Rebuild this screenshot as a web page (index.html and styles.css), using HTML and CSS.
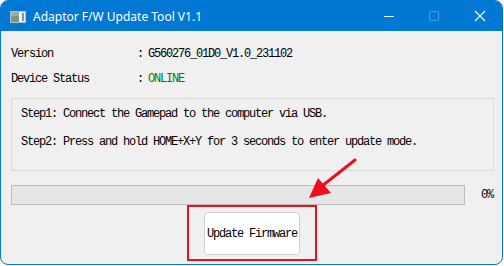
FILE: index.html
```html
<!DOCTYPE html>
<html>
<head>
<meta charset="utf-8">
<link rel="stylesheet" href="styles.css">
</head>
<body>
<div class="window">
  <div class="titlebar">
    <svg class="app-icon" width="16" height="12" viewBox="0 0 16 12">
      <rect x="0.5" y="0.5" width="15" height="11" fill="#e9ecef" stroke="#b9c0c4"/>
      <rect x="1" y="1" width="8" height="10" fill="#6f9a86"/>
      <rect x="1" y="1" width="8" height="4" fill="#8fb3a3"/>
      <rect x="9" y="1" width="2" height="10" fill="#f7f7f7"/>
      <rect x="12" y="2" width="2" height="8" fill="#8a9499"/>
    </svg>
    <span class="title">Adaptor F/W Update Tool V1.1</span>
    <div class="controls">
      <svg class="ctl" width="46" height="30" viewBox="0 0 46 30"><line x1="20" y1="15.5" x2="30" y2="15.5" stroke="#fff" stroke-width="1"/></svg>
      <svg class="ctl" width="46" height="30" viewBox="0 0 46 30"><rect x="19.5" y="10.5" width="9" height="9" rx="1" fill="none" stroke="#4c9de0" stroke-width="1"/></svg>
      <svg class="ctl" width="46" height="30" viewBox="0 0 46 30"><path d="M19 10 L29 20 M29 10 L19 20" stroke="#fff" stroke-width="1.1"/></svg>
    </div>
  </div>
  <div class="content">
    <div class="info-row"><span class="label">Version</span><span class="sep">:</span><span class="value">G560276_01D0_V1.0_231102</span></div>
    <div class="info-row"><span class="label">Device Status</span><span class="sep">:</span><span class="value online">ONLINE</span></div>
    <div class="steps">
      <div class="step">Step1: Connect the Gamepad to the computer via USB.</div>
      <div class="step">Step2: Press and hold HOME+X+Y for 3 seconds to enter update mode.</div>
    </div>
    <div class="progress-row">
      <div class="progress"></div>
      <span class="percent">0%</span>
    </div>
    <div class="action-row">
      <div class="highlight">
        <button class="update-btn">Update Firmware</button>
      </div>
    </div>
  </div>
  <svg class="arrow" width="504" height="266" viewBox="0 0 504 266">
    <line x1="355" y1="160" x2="322" y2="186" stroke="#e8111c" stroke-width="3" stroke-linecap="round"/>
    <polygon points="309,198 318,178 331,193" fill="#e8111c"/>
  </svg>
</div>
</body>
</html>
```
FILE: styles.css
```css
html, body {
  margin: 0;
  padding: 0;
  background: #ffffff;
}
.window {
  position: relative;
  box-sizing: border-box;
  width: 503px;
  height: 265px;
  border: 1px solid #0078d4;
  border-radius: 8px;
  overflow: hidden;
  background: #f0f0f0;
}
.titlebar {
  height: 30px;
  background: #0078d4;
  display: flex;
  align-items: center;
  color: #fff;
}
.app-icon {
  margin-left: 9px;
  margin-top: 1px;
  flex: none;
}
.title {
  margin-left: 7px;
  font-family: "Noto Sans", sans-serif;
  font-size: 12px;
  margin-top: 1px;
}
.controls {
  margin-left: auto;
  display: flex;
}
.ctl {
  display: block;
}
.content {
  padding: 11px 0 0 10px;
  font-family: "Liberation Mono", "DejaVu Sans Mono", monospace;
  font-size: 12px;
  letter-spacing: -1.2px;
  color: #000;
}
.info-row {
  display: flex;
  height: 25px;
  line-height: 25px;
}
.label {
  width: 126px;
}
.sep {
  width: 11px;
}
.online {
  color: #008000;
}
.steps {
  margin-top: 6px;
  box-sizing: border-box;
  width: 483px;
  border: 1px solid #dadada;
  padding: 1px 0 14px 9px;
}
.step {
  line-height: 28px;
  height: 28px;
  white-space: nowrap;
}
.progress-row {
  display: flex;
  align-items: center;
  margin-top: 14px;
  height: 20px;
}
.progress {
  box-sizing: border-box;
  width: 454px;
  height: 20px;
  border: 1px solid #bcbcbc;
  background: #e6e6e6;
}
.percent {
  margin-left: 16px;
}
.action-row {
  display: flex;
  padding-left: 176px;
}
.highlight {
  box-sizing: border-box;
  width: 130px;
  height: 56px;
  border: 2px solid #e81123;
  padding: 5px 0 0 15px;
}
.update-btn {
  box-sizing: border-box;
  width: 96px;
  height: 43px;
  background: #ffffff;
  border: 1px solid #d0d0d0;
  border-radius: 4px;
  font-family: "Liberation Mono", "DejaVu Sans Mono", monospace;
  font-size: 12px;
  letter-spacing: -1.2px;
  color: #000;
  padding: 0;
  display: block;
}
.arrow {
  position: absolute;
  left: -1px;
  top: -1px;
  pointer-events: none;
}
```
